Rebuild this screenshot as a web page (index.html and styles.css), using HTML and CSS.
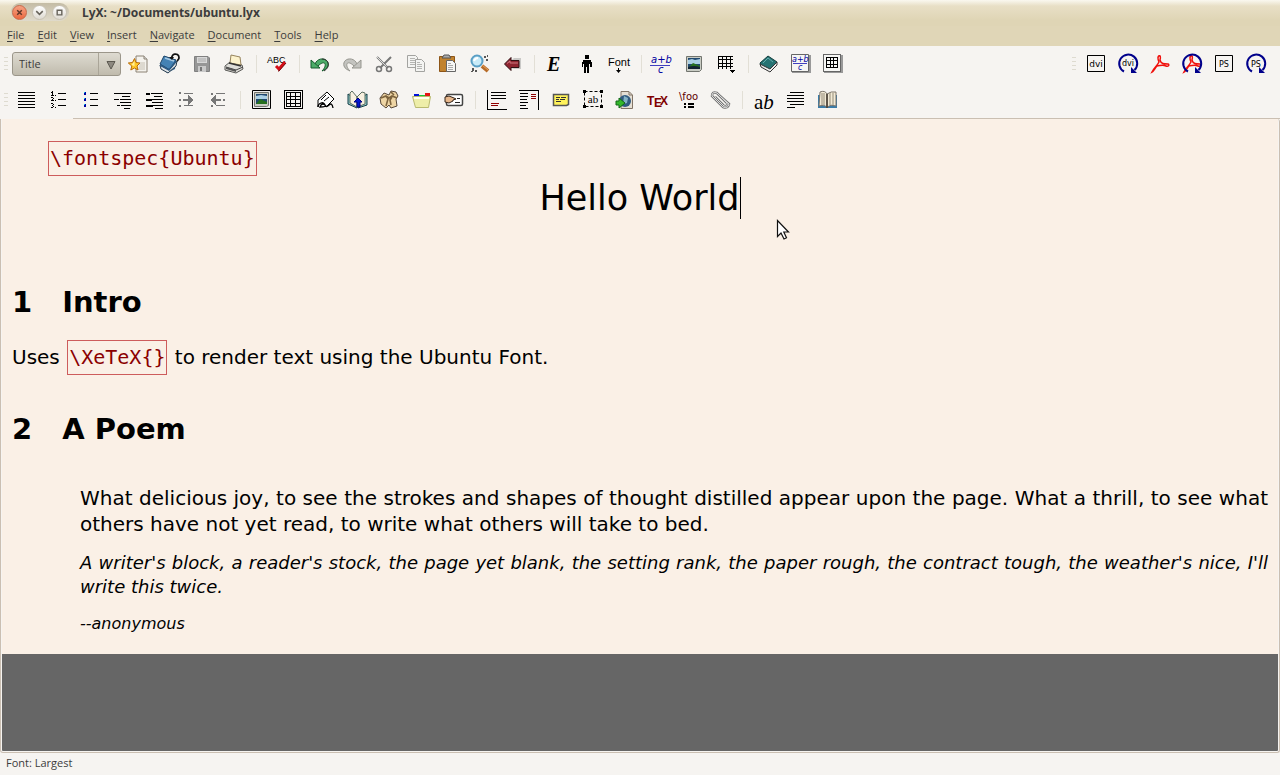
FILE: index.html
```html
<!DOCTYPE html>
<html lang="en">
<head>
<meta charset="utf-8">
<title>LyX: ~/Documents/ubuntu.lyx</title>
<link rel="stylesheet" href="styles.css">
</head>
<body>
<div class="window">
<header class="titlebar">
  <div class="controls">
    <button class="ctl ctl-close" aria-label="Close"><svg viewBox="0 0 14 14"><path d="M4.500 4.500l5 5M9.500 4.500l-5 5" stroke="#60372a" stroke-width="1.600"/></svg></button>
    <button class="ctl" aria-label="Minimize"><svg viewBox="0 0 14 14"><path d="M3.500 5.500L7 9l3.500-3.500" fill="none" stroke="#66625a" stroke-width="1.600"/></svg></button>
    <button class="ctl" aria-label="Maximize"><svg viewBox="0 0 14 14"><path d="M4.500 4.500h5v5h-5z" fill="none" stroke="#66625a" stroke-width="1.500"/></svg></button>
  </div>
  <h1 class="window-title">LyX: ~/Documents/ubuntu.lyx</h1>
</header>
<nav class="menubar">
  <button><u>F</u>ile</button><button><u>E</u>dit</button><button><u>V</u>iew</button><button><u>I</u>nsert</button><button><u>N</u>avigate</button><button><u>D</u>ocument</button><button><u>T</u>ools</button><button><u>H</u>elp</button>
</nav>
<div class="toolbar">
  <span class="grip"></span>
  <div class="combo">
    <select aria-label="Paragraph style"><option>Title</option><option>Section</option><option>Standard</option></select>
    <svg class="combo-arrow" viewBox="0 0 10 10"><path d="M1 1.500h8L5 9z" fill="#8d8980" stroke="#5c5950"/></svg>
  </div>
  <button class="tool" aria-label="New document"><svg viewBox="-12 -12 24 24"><path d="M-2-8H6L9-5V8H-2z" fill="#f4f2ed" stroke="#8b8274"/><path d="M6-8v3h3" fill="#ddd" stroke="#8b8274"/><path d="M2-2h5v8H0z" fill="#ddd9d0"/><path d="M-3.500-5.500l1.500 4 4 .500-3 3 1 4-3.500-2-3.700 2 1-4-3.500-3 4.200-.500z" fill="#ffc928" stroke="#b76b0c"/><path d="M-3.500-3v5l-3-1z" fill="#fff0a0"/></svg></button>
  <button class="tool" aria-label="Open document"><svg viewBox="-12 -12 24 24"><path d="M-10 1L-6-8 6-4 5 5-3 9z" fill="#2c5b86"/><path d="M-10 0L-6-8 6-4 0 6z" fill="#4482b4" stroke="#244a6c"/><path d="M-10 1L-1 6 7-3 6 2-2 9-9 5z" fill="#dfe3e5" stroke="#263c50"/><path d="M-10 1L-1 6 6-3" fill="none" stroke="#2c5b86" stroke-width="1.500"/><path d="M-5-6L4-3" stroke="#a9cae3" stroke-width="1.500"/><path d="M2-6C1-10 8-12 9-7c.500 2-1 3-2 4" fill="none" stroke="#111" stroke-width="1.800"/><path d="M-1-7l5 0-2 3z" fill="#111"/></svg></button>
  <button class="tool" aria-label="Save document"><svg viewBox="-12 -12 24 24"><path d="M-7.500-7.500H6L7.500-6V7.500h-15z" fill="#969696" stroke="#808080"/><path d="M-5-7H5v6H-5z" fill="#d8d8d8"/><path d="M-4-5h8M-4-3h8" stroke="#aaa"/><path d="M-4 2h8v6h-8z" fill="#c9c9c9"/><path d="M-2 3h2v4h-2z" fill="#777"/></svg></button>
  <button class="tool" aria-label="Print document"><svg viewBox="-12 -12 24 24"><path d="M-9 2L-4-2 8 1 9 5 2 9-9 6z" fill="#deddd8" stroke="#595957"/><path d="M-3-9L6-7 7 1-4-1z" fill="#fcf2cc" stroke="#96835c"/><path d="M-8 3L2 6 9 3" fill="none" stroke="#454545"/><path d="M-8 5L2 8v-2l-10-3z" fill="#555"/><path d="M-5-1l12 3" stroke="#333" stroke-width="1.500"/></svg></button>
  <span class="sep"></span>
  <button class="tool" aria-label="Check spelling"><svg viewBox="-12 -12 24 24"><text x="-10" y="-1" class="t-cond" font-size="9">ABC</text><path d="M-1 2L2 5 8-2" fill="none" stroke="#d40d16" stroke-width="3"/><path d="M1 7h1L9-1" fill="none" stroke="#730c10"/></svg></button>
  <span class="sep"></span>
  <button class="tool" aria-label="Undo"><svg viewBox="-12 -12 24 24"><path d="M-5 0C-2-8 10-6 8 2 7 5 4 6 2 7 8 1 5-5-2 2" fill="#4cad68" stroke="#155b2c"/><path d="M-9-4V4H0z" fill="#4cad68" stroke="#155b2c"/><path d="M4 7c7-4 5-12-2-12" fill="none" stroke="#333"/></svg></button>
  <button class="tool" aria-label="Redo"><svg viewBox="-12 -12 24 24"><path d="M5 0C2-8-10-6-8 2-7 5-4 6-2 7-8 1-5-5 2 2" fill="#c4c4c0" stroke="#96968f"/><path d="M9-4V4H0z" fill="#c4c4c0" stroke="#96968f"/></svg></button>
  <button class="tool" aria-label="Cut"><svg viewBox="-12 -12 24 24"><path d="M-7-7L4 4M7-7L-4 4" fill="none" stroke="#777" stroke-width="2"/><path d="M-7-7L3 3" stroke="#ddd"/><circle cx="-5" cy="5" r="2.500" fill="none" stroke="#777" stroke-width="1.500"/><circle cx="5" cy="5" r="2.500" fill="none" stroke="#777" stroke-width="1.500"/></svg></button>
  <button class="tool" aria-label="Copy"><svg viewBox="-12 -12 24 24"><path d="M-8.500-8.500h8l2 2v10h-10z" fill="#f4f4f2" stroke="#a3a3a0"/><path d="M-6-5.500H-1M-6-3.500H-1M-6-1.500H-1M-6 .500H-1" stroke="#b5b5b2"/><path d="M-.500-4.500h6l3 3v9h-9z" fill="#f4f4f2" stroke="#a3a3a0"/><path d="M1-1.500h3M1 .500h5M1 2.500h5M1 4.500h5" stroke="#b5b5b2"/></svg></button>
  <button class="tool" aria-label="Paste"><svg viewBox="-12 -12 24 24"><path d="M-8.500-7.500h15v15h-15z" fill="#c1832f" stroke="#8d5517"/><path d="M-4-9h5l2 3h-9z" fill="#aaa" stroke="#555"/><path d="M-1.500-3.500h6l3 3v8h-9z" fill="#f7f7f5" stroke="#666"/><path d="M0-.500h3M0 1.500h5M0 3.500h5M0 5.500h5" stroke="#aaa"/></svg></button>
  <button class="tool" aria-label="Find and replace"><svg viewBox="-12 -12 24 24"><path d="M2 2L8 7" stroke="#b66b28" stroke-width="4"/><path d="M2 1L8 6" stroke="#e8a35d"/><circle cx="-3" cy="-3" r="5.500" fill="#c9ebf8" stroke="#5a9fc5" stroke-width="2"/><path d="M-6-3q1-3 4-3" fill="none" stroke="#fff" stroke-width="2"/><path d="M4-8h2v2H4zM6-5h2v2H6zM7-9h1v2H7zM-8 4h2v3h-2zM-5 6h2v2h-2zM-9 7h2v1h-2z" fill="#555"/></svg></button>
  <button class="tool" aria-label="Go back"><svg viewBox="-12 -12 24 24"><path d="M-7 2L2-6h7v11H2z" fill="#777" opacity=".35"/><path d="M-7.500 0L-1-6.500v3h8v7h-8v3z" fill="#8f2430" stroke="#301014"/><path d="M-5-.500L-2-3v2h8" fill="none" stroke="#ce7880"/></svg></button>
  <span class="sep"></span>
  <button class="tool" aria-label="Emphasize"><svg viewBox="-12 -12 24 24"><text x="-8" y="7" class="t-serif" font-size="20">E</text></svg></button>
  <button class="tool" aria-label="Noun style"><svg viewBox="-12 -12 24 24" class="crisp"><path d="M-2-9h4v4h-4zM-4-4h8v2h1v5H3V0H2v9H0V3H-1v6h-2V0h-1v3h-1v-5h1z"/></svg></button>
  <button class="tool" aria-label="Text style"><svg viewBox="-12 -12 24 24"><text x="-11" y="2" class="t-cond" font-size="11">Font</text><path d="M-1 4h1v2h2L-.500 9-3 6h2z"/></svg></button>
  <span class="sep"></span>
  <button class="tool" aria-label="Insert math"><svg viewBox="-12 -12 24 24"><text x="-11" y="-1" class="t-math" font-size="10">a+b</text><path d="M-12 1h20v1h-20z" fill="#4040c0"/><text x="-4" y="9" class="t-math" font-size="10">c</text></svg></button>
  <button class="tool" aria-label="Insert graphics"><svg viewBox="-12 -12 24 24"><path d="M-7.500-7.500h15v13l-2 2h-13z" fill="#c9ccc4" stroke="#72756f"/><path d="M-6-6H6V5H-6z" fill="#20486f"/><path d="M-6-4l4-1 3 1 5-1V0H-6z" fill="#aad0e5"/><path d="M-6 4L-1-1 6 2v3H-6z" fill="#26701f"/><path d="M-6 3q6-2 12 0v2H-6z" fill="#123"/></svg></button>
  <button class="tool" aria-label="Insert table"><svg viewBox="-12 -12 24 24" class="crisp"><path d="M-8-7.500H7M-8-4.500H7M-8-.500H7M-8 2.500H7M-7.500-8V5M-3.500-8V5M.500-8V5M4.500-8V5" stroke="#000" fill="none"/><path d="M4 6h5L6.500 9z"/></svg></button>
  <span class="sep"></span>
  <button class="tool" aria-label="Toggle outline"><svg viewBox="-12 -12 24 24"><path d="M-9-1L-1-8 8-2 1 6-8 2z" fill="#267373" stroke="#123c3c"/><path d="M-9 0L1 5 8-2V1L1 8-8 3z" fill="#eee" stroke="#333"/><path d="M-6-1L-1-6 4-2" fill="none" stroke="#65adad"/></svg></button>
  <button class="tool" aria-label="Toggle math toolbar"><svg viewBox="-12 -12 24 24"><path d="M-9-9H10V9H-9z" fill="#999"/><path d="M-9.500-9.500h17v17h-17z" fill="#f6f6f4" stroke="#666"/><text x="-9" y="-2" class="t-math" font-size="8">a+b</text><path d="M-8-1H6v1H-8z" fill="#4040c0"/><text x="-3" y="6" class="t-math" font-size="8">c</text></svg></button>
  <button class="tool" aria-label="Toggle table toolbar"><svg viewBox="-12 -12 24 24" class="crisp"><path d="M-9-9H10V9H-9z" fill="#999"/><path d="M-9.500-9.500h17v17h-17z" fill="#f6f6f4" stroke="#666"/><path d="M-6.500-6.500h11v10h-11zM-6-3.500H5M-6 .500H5M-2.500-6V4M.500-6V4" fill="none" stroke="#000"/></svg></button>
  <span class="spacer"></span>
  <span class="grip"></span>
  <button class="tool" aria-label="View DVI"><svg viewBox="-12 -12 24 24"><path d="M-8.500-8.500h17v16h-17z" fill="none" stroke="#000"/><text x="0" y="3" text-anchor="middle" class="t-sans" font-size="9">dvi</text></svg></button>
  <button class="tool" aria-label="Update DVI"><svg viewBox="-12 -12 24 24"><path d="M-4 7.500A9 9 0 1 1 6.500 6" fill="none" stroke="#00008b" stroke-width="2"/><path d="M3 3l6 6H3z" fill="#00008b"/><text x="0" y="2" text-anchor="middle" class="t-sans" font-size="8">dvi</text></svg></button>
  <button class="tool" aria-label="View PDF"><svg viewBox="-12 -12 24 24"><path d="M-8 8C-6 4-3 2-1-2c-3-7 3-9 1-2 1 4 4 4 8 4 2 1 0 3-2 2C2 0 0 2-3 2c-2 2-3 5-5 6z" fill="none" stroke="#f0100c" stroke-width="1.500"/></svg></button>
  <button class="tool" aria-label="Update PDF"><svg viewBox="-12 -12 24 24"><path d="M-8 8C-6 4-3 2-1-2c-3-7 3-9 1-2 1 4 4 4 8 4 2 1 0 3-2 2C2 0 0 2-3 2c-2 2-3 5-5 6z" fill="none" stroke="#f0100c" stroke-width="1.500"/><path d="M-4 7.500A9 9 0 1 1 6.500 6" fill="none" stroke="#00008b" stroke-width="2"/><path d="M3 3l6 6H3z" fill="#00008b"/></svg></button>
  <button class="tool" aria-label="View PostScript"><svg viewBox="-12 -12 24 24"><path d="M-8.500-8.500h17v16h-17z" fill="none" stroke="#000"/><text x="0" y="3" text-anchor="middle" class="t-sans" font-size="8">PS</text></svg></button>
  <button class="tool" aria-label="Update PostScript"><svg viewBox="-12 -12 24 24"><path d="M-4 7.500A9 9 0 1 1 6.500 6" fill="none" stroke="#00008b" stroke-width="2"/><path d="M3 3l6 6H3z" fill="#00008b"/><text x="0" y="3" text-anchor="middle" class="t-sans" font-size="8">PS</text></svg></button>
</div>
<div class="toolbar toolbar-extra">
  <span class="grip"></span>
  <button class="tool" aria-label="Default layout"><svg viewBox="-12 -12 24 24" class="crisp"><path d="M-8-7.500H9M-8-4.500H9M-8-1.500H9M-8 1.500H9M-8 4.500H9M-8 7.500H9" stroke="#000"/></svg></button>
  <button class="tool" aria-label="Numbered list"><svg viewBox="-12 -12 24 24" class="crisp"><path d="M0-6.500H8M0-.500H8M0 5.500H8" stroke="#000"/><path d="M-6-9h1v4h-1zM-7-8h1v1h-1zM-7-5h3v1h-3zM-3-5h1v1h-1zM-7-3h2v1h-2zM-5-2h1v1h-1zM-6-1h1v1h-1zM-7 0h3v1h-3zM-3 0h1v1h-1zM-7 3h2v1h-2zM-5 4h1v1h-1zM-6 5h1v1h-1zM-5 6h1v1h-1zM-7 7h2v1h-2zM-3 7h1v1h-1z"/></svg></button>
  <button class="tool" aria-label="Itemized list"><svg viewBox="-12 -12 24 24" class="crisp"><path d="M0-6.500H8M0-.500H8M0 5.500H8" stroke="#000"/><path d="M-6-8h2v3h-2zM-6-2h2v3h-2zM-6 4h2v3h-2z" fill="#0000a0"/><path d="M-6-8h1v1h-1zM-6-2h1v1h-1zM-6 4h1v1h-1z" fill="#00c8f0"/></svg></button>
  <button class="tool" aria-label="List"><svg viewBox="-12 -12 24 24" class="crisp"><path d="M-8-6.500H9M0-3.500H8M-8-.500h5M-2-.500H9M-2 2.500H9M-5 5.500h3M-1 5.500H9M2 8.500H8" stroke="#000"/></svg></button>
  <button class="tool" aria-label="Description"><svg viewBox="-12 -12 24 24" class="crisp"><path d="M-3-6.500H9M0-3.500H8M-3-.500H9M-2 2.500H9M-1 5.500H9M1 8.500H9" stroke="#000"/><path d="M-8-7h4v2h-4zM-8-1h6v2h-6zM-8 5h7v2h-7z"/></svg></button>
  <button class="tool" aria-label="Increase depth"><svg viewBox="-12 -12 24 24" class="crisp"><path d="M-2-6.500H7M-2 5.500H7" stroke="#777"/><path d="M-3-1H2v-4l6 5-6 5V1h-5zM-7-8h2v2h-2zM-7-1h2v2h-2zM-7 5h2v2h-2z" fill="#777"/></svg></button>
  <button class="tool" aria-label="Decrease depth"><svg viewBox="-12 -12 24 24" class="crisp"><path d="M-2-6.500H7M-2 5.500H7" stroke="#777"/><path d="M3-1H-2v-4l-6 5 6 5V1h5zM-7-7h2v2h-2zM-7 5h2v2h-2zM5-1h2v2H5z" fill="#777"/></svg></button>
  <span class="sep"></span>
  <button class="tool" aria-label="Insert figure float"><svg viewBox="-12 -12 24 24"><path d="M-8.500-9.500h18v18h-18z" fill="#eee" stroke="#000"/><path d="M-6.500-7.500h14v13l-2 1h-12z" fill="#c9ccc4" stroke="#72756f"/><path d="M-5-6H6V4H-5z" fill="#20486f"/><path d="M-5-4l5-1 6 1v3H-5z" fill="#aad0e5"/><path d="M-5 4L-1-1 6 2v2H-5z" fill="#26701f"/></svg></button>
  <button class="tool" aria-label="Insert table float"><svg viewBox="-12 -12 24 24" class="crisp"><path d="M-8.500-9.500h18v18h-18zM-6.500-7.500h14v14h-14zM-7-3.500H8M-7-.500H8M-7 3.500H8M-2.500-8V7M2.500-8V7" fill="none" stroke="#000"/></svg></button>
  <button class="tool" aria-label="Insert label"><svg viewBox="-12 -12 24 24"><path d="M-7 7V0L2-8 9-1 2 6" fill="#fff" stroke="#000"/><path d="M-4 0L1-5M-1 1L4-3" stroke="#000"/><path d="M-7 7q0-3 3-4t4 2 4 0 4 3M-4 5q2-2 4 0T-5 7z" fill="none" stroke="#000" stroke-width="1.300"/></svg></button>
  <button class="tool" aria-label="Insert cross-reference"><svg viewBox="-12 -12 24 24"><path d="M-9-6L0 0V8L-9 4zM10-6L1 0V8L10 5z" fill="#8fc9c9" stroke="#123d45"/><path d="M-5-9L0-3V7L-7 3V-7zM5-8L0-3V7L8 4V-7z" fill="#f8f0df" stroke="#5c6e61"/><path d="M1-2L5 2H3V7H0V2h-3z" fill="#0018d0" stroke="#000080"/></svg></button>
  <button class="tool" aria-label="Insert citation"><svg viewBox="-12 -12 24 24"><path d="M-9-2L-5-7 0-5 2-9 7-8 9-4 7-1 8 6 2 8 0 5-3 8-8 4z" fill="#eed5a4" stroke="#57483a"/><path d="M-8-2l5-2 3 2 3-2 5 2M-3-4l2 3-2 7M3-3l-2 3 1 5M2-8l3 3" fill="none" stroke="#7c633d" stroke-width="1.600"/></svg></button>
  <button class="tool" aria-label="Insert index entry"><svg viewBox="-12 -12 24 24"><path d="M-7-6h5v3h-5z" fill="#0010d8"/><path d="M-2-5h6v3h-6z" fill="#18c838"/><path d="M4-7h5v4H4z" fill="#e31616"/><path d="M-8.500-3.500h18l-2 11h-13z" fill="#eeeea9" stroke="#b9ba70"/><path d="M-7-2H8" stroke="#fffff0" stroke-width="2"/></svg></button>
  <button class="tool" aria-label="Insert nomenclature entry"><svg viewBox="-12 -12 24 24"><rect x="-6.500" y="-5.500" width="16" height="11" rx="1.500" fill="#fff" stroke="#444" stroke-width="1.500"/><path d="M-8-3l4-1 5 2 2 1-3 1v1l-4 2-4-1z" fill="#e7b78c" stroke="#332419"/><path d="M4-1.500h3M2 2.500h5" stroke="#222"/></svg></button>
  <span class="sep"></span>
  <button class="tool" aria-label="Insert footnote"><svg viewBox="-12 -12 24 24" class="crisp"><path d="M-8.500-10V9.500H11M-5-7.500H10M-5-4.500H10M-5-1.500H10" fill="none" stroke="#000"/><path d="M-5 3.500H3M-5 5.500H2" stroke="#900000"/></svg></button>
  <button class="tool" aria-label="Insert margin note"><svg viewBox="-12 -12 24 24" class="crisp"><path d="M-9-9.500H10.500V10M-8-6.500h8M-8-3.500h8M-8-.500h7M-8 2.500h8M-8 5.500h6M-8 8.500h8" fill="none" stroke="#000"/><path d="M3-5.500h5M3-3.500h5M3-1.500h5" stroke="#900000"/></svg></button>
  <button class="tool" aria-label="Insert note"><svg viewBox="-12 -12 24 24"><path d="M-6.500-5.500h15v10l-2 1h-13z" fill="#fff25a" stroke="#555" stroke-width="1.500"/><path d="M-4-2.500h4M1-2.500h5M-4-.500h3M0-.500h5M-4 1.500h5" stroke="#333"/></svg></button>
  <button class="tool" aria-label="Insert box"><svg viewBox="-12 -12 24 24"><rect x="-7.500" y="-8.500" width="17" height="15" fill="none" stroke="#000" stroke-dasharray="3 2"/><path d="M-9-10h3v3h-3zM8-10h3v3H8zM-9 5h3v3h-3zM8 5h3v3H8z"/><text x="1" y="3" text-anchor="middle" class="t-reg" font-size="11">ab</text></svg></button>
  <button class="tool" aria-label="Insert hyperlink"><svg viewBox="-12 -12 24 24"><path d="M-3-8.500H5L8.500-5V8.500H-3z" fill="#e5dfd4" stroke="#827466"/><path d="M5-8v3h3" fill="none" stroke="#827466"/><circle cx="1" cy="1" r="6" fill="#315b80"/><path d="M0-4l4 2-1 5-4 1z" fill="#85b3c6"/><path d="M-8 1h3v-3l6 5-6 5V5h-3z" fill="#34b82b" stroke="#126818"/></svg></button>
  <button class="tool" aria-label="Insert TeX code"><svg viewBox="-12 -12 24 24"><text y="5" class="t-tex" font-size="12"><tspan x="-9">T</tspan><tspan x="-2" dy="2">E</tspan><tspan x="4" dy="-2">X</tspan></text></svg></button>
  <button class="tool" aria-label="Insert math macro"><svg viewBox="-12 -12 24 24"><text x="-9" y="0" class="t-sans t-maroon" font-size="10">\foo</text><path d="M-4 3h2v2h-2zM-4 6h2v2h-2zM0 3h6v2h-6zM0 6h6v2h-6z"/></svg></button>
  <button class="tool" aria-label="Include file"><svg viewBox="-12 -12 24 24"><path d="M-5-3L4 6q4 1 3-3L-3-7q-5-2-5 3L3 7q5 2 6-3L0-4" fill="none" stroke="#777" stroke-width="2.500"/><path d="M-5-3L4 6q4 1 3-3L-3-7q-5-2-5 3L3 7q5 2 6-3L0-4" fill="none" stroke="#ddd"/></svg></button>
  <span class="sep"></span>
  <button class="tool" aria-label="Text properties"><svg viewBox="-12 -12 24 24"><text x="-9" y="9" class="t-reg" font-size="21">a<tspan class="t-ital">b</tspan></text></svg></button>
  <button class="tool" aria-label="Paragraph settings"><svg viewBox="-12 -12 24 24" class="crisp"><path d="M-5-7.500H9M-8-4.500H9M-8-1.500H9M-8 1.500H9M-5 4.500H9M-8 7.500H0" stroke="#000"/></svg></button>
  <button class="tool" aria-label="Thesaurus"><svg viewBox="-12 -12 24 24"><path d="M-9-5H10V8H-9z" fill="#397ba8"/><path d="M-7-8q5-2 7 2V7q-3-3-8-1zM9-8Q4-9 0-6V7q4-3 9-1z" fill="#f2ead6" stroke="#7c756b"/><path d="M-5-7v12M-3-7V5M3-7V5M6-7V5" stroke="#b3aa97" stroke-width="1.500"/><path d="M0-6V8" stroke="#4a4034" stroke-width="1.500"/></svg></button>
</div>
<div class="tab-edge"></div>
<main class="editor">
  <article class="page">
    <p class="preamble"><code class="ert">\fontspec{Ubuntu}</code></p>
    <p class="doc-title">Hello World<span class="caret"></span></p>
    <h2 class="section"><span class="num">1</span>Intro</h2>
    <p class="standard">Uses <code class="ert">\XeTeX{}</code> to render text using the Ubuntu Font.</p>
    <h2 class="section"><span class="num">2</span>A Poem</h2>
    <blockquote class="quote">
      <p class="normal">What delicious joy, to see the strokes and shapes of thought distilled appear upon the page. What a thrill, to see what others have not yet read, to write what others will take to bed.</p>
      <p class="verse">A writer's block, a reader's stock, the page yet blank, the setting rank, the paper rough, the contract tough, the weather's nice, I'll write this twice.</p>
      <p class="attribution">--anonymous</p>
    </blockquote>
  </article>
  <svg class="pointer" viewBox="0 0 14 22"><path d="M1.500 1.500v16l3.500-3.500 3 6 2.500-1.300-2.700-5.700h4.700z" fill="#fff" stroke="#111" stroke-width="1.200"/></svg>
</main>
<footer class="status">Font: Largest</footer>
</div>
</body>
</html>
```

FILE: styles.css
```css
* { box-sizing: border-box; }

body {
  margin: 0;
  background: #f6f4f1;
  font-family: "Open Sans", "Noto Sans", sans-serif;
  font-size: 11px;
  color: #3c3c3c;
}

button {
  margin: 0;
  padding: 0;
  border: 0;
  background: none;
  font: inherit;
  color: inherit;
}

.window {
  display: flex;
  flex-direction: column;
  min-height: 100vh;
}

/* Title bar and menus */
.titlebar {
  display: flex;
  align-items: center;
  gap: 13px;
  height: 26px;
  padding-left: 11px;
  background: linear-gradient(#faf8f0, #e8dfc6 6px, #dfd5b5 20px);
}

.controls {
  display: flex;
  align-items: center;
  gap: 5px;
  height: 18px;
  width: 58px;
  margin-bottom: 2px;
  padding: 0 1px;
  border-radius: 9px;
  background: linear-gradient(#c4bca5, #dfdacb);
}

.ctl {
  width: 15px;
  height: 15px;
  border-radius: 50%;
  border: 1px solid #c8c2b4;
  background: linear-gradient(#fff, #dedad1);
}

.ctl svg {
  display: block;
  width: 13px;
  height: 13px;
}

.ctl-close {
  border-color: #c8694a;
  background: linear-gradient(#f5a283, #ec6840);
}

.window-title {
  margin: 0;
  font-family: "Noto Sans", "Open Sans", sans-serif;
  font-size: 12px;
  line-height: 26px;
  font-weight: 700;
}

.menubar {
  display: flex;
  gap: 13px;
  height: 20px;
  padding: 0 7px 2px;
  background: #e0d6b7;
  line-height: 16px;
}

.menubar u {
  text-underline-offset: 2px;
}

/* Toolbars */
.toolbar {
  display: flex;
  align-items: center;
  height: 36px;
  padding: 0 8px 0 4px;
}

.grip {
  width: 4px;
  height: 16px;
  margin-right: 4px;
  background: repeating-linear-gradient(transparent 0 1px, #dedbd0 1px 2px, transparent 2px 4px);
}

.toolbar-extra .grip { margin-right: 2px; }

.combo {
  position: relative;
  width: 109px;
  height: 24px;
  margin-right: 1px;
}

.combo select {
  width: 100%;
  height: 100%;
  padding: 0 0 2px 6px;
  border: 1px solid #9b968a;
  border-radius: 3px;
  appearance: none;
  background:
    linear-gradient(#aaa598, #aaa598) right 21px top / 1px 100% no-repeat,
    linear-gradient(#dedbd1, #c0bbad);
  font: inherit;
  color: inherit;
}

.combo-arrow {
  position: absolute;
  right: 5px;
  top: 8px;
  width: 10px;
  height: 10px;
  pointer-events: none;
}

.tool {
  flex: none;
  display: flex;
  align-items: center;
  justify-content: center;
  width: 32px;
  height: 32px;
}

.tool svg {
  width: 24px;
  height: 24px;
  overflow: visible;
}

.crisp { shape-rendering: crispEdges; }

.sep {
  flex: none;
  width: 11px;
  height: 18px;
  background: linear-gradient(#e2dfd6, #e2dfd6) 6px 0 / 1px 100% no-repeat;
}

.spacer { flex: 1; }

/* Lettering inside tool icons */
.t-cond { font-family: "Liberation Sans", sans-serif; }
.t-sans { font-family: "DejaVu Sans", sans-serif; }
.t-maroon { fill: #600000; }
.t-serif { font-family: "Liberation Serif", serif; font-style: italic; font-weight: 700; }
.t-math { font-family: "DejaVu Sans", sans-serif; font-style: italic; fill: #0000a0; }
.t-reg { font-family: "Liberation Serif", serif; }
.t-ital { font-style: italic; }
.t-tex { font-family: "Liberation Sans", sans-serif; font-weight: 700; fill: #800000; }

/* Document */
.tab-edge {
  height: 1px;
  margin-left: 73px;
  background: #cabfb2;
}

.editor {
  position: relative;
  flex: 1;
  border: solid #cabfb2;
  border-width: 0 1px 1px;
  border-radius: 0 3px 3px 3px;
  padding: 0 1px 1px;
  background: #666 content-box;
  font-family: "DejaVu Sans", sans-serif;
  font-size: 20px;
  color: #000;
}

.page {
  padding: 22px 10px 18px;
  background: #faf0e6;
}

.page p,
.page h2,
.page blockquote { margin: 0; }

.ert {
  display: inline-block;
  height: 35px;
  padding: 0 1px;
  border: 1px solid #cd5c5c;
  font-family: "DejaVu Sans Mono", monospace;
  font-size: 20px;
  line-height: 33px;
  color: #8b0000;
}

.preamble {
  display: flex;
  padding-left: 36px;
}

.page .doc-title {
  display: flex;
  justify-content: center;
  margin-top: 1px;
  font-size: 35px;
  line-height: 42px;
}

.caret {
  width: 1px;
  height: 42px;
  background: #000;
}

.page .section {
  display: flex;
  gap: 30px;
  margin-top: 65px;
  font-size: 29px;
  line-height: 36px;
}

.page .standard {
  margin-top: 20px;
  line-height: 35px;
}

.standard .ert {
  margin: 0 1px;
  vertical-align: top;
}

.page .standard + .section { margin-top: 36px; }

.page .quote {
  margin-top: 38px;
  padding-left: 68px;
  text-align: justify;
}

.normal { line-height: 26px; }

.page .verse {
  margin-top: 14px;
  font-size: 18px;
  line-height: 24px;
  font-style: italic;
}

.page .attribution {
  margin-top: 13px;
  font-size: 16px;
  line-height: 24px;
  font-style: italic;
}

.pointer {
  position: absolute;
  left: calc(50% + 136px);
  top: 100px;
  width: 14px;
  height: 22px;
}

.status {
  height: 22px;
  padding-left: 6px;
  font-size: 11px;
  line-height: 20px;
}
```
